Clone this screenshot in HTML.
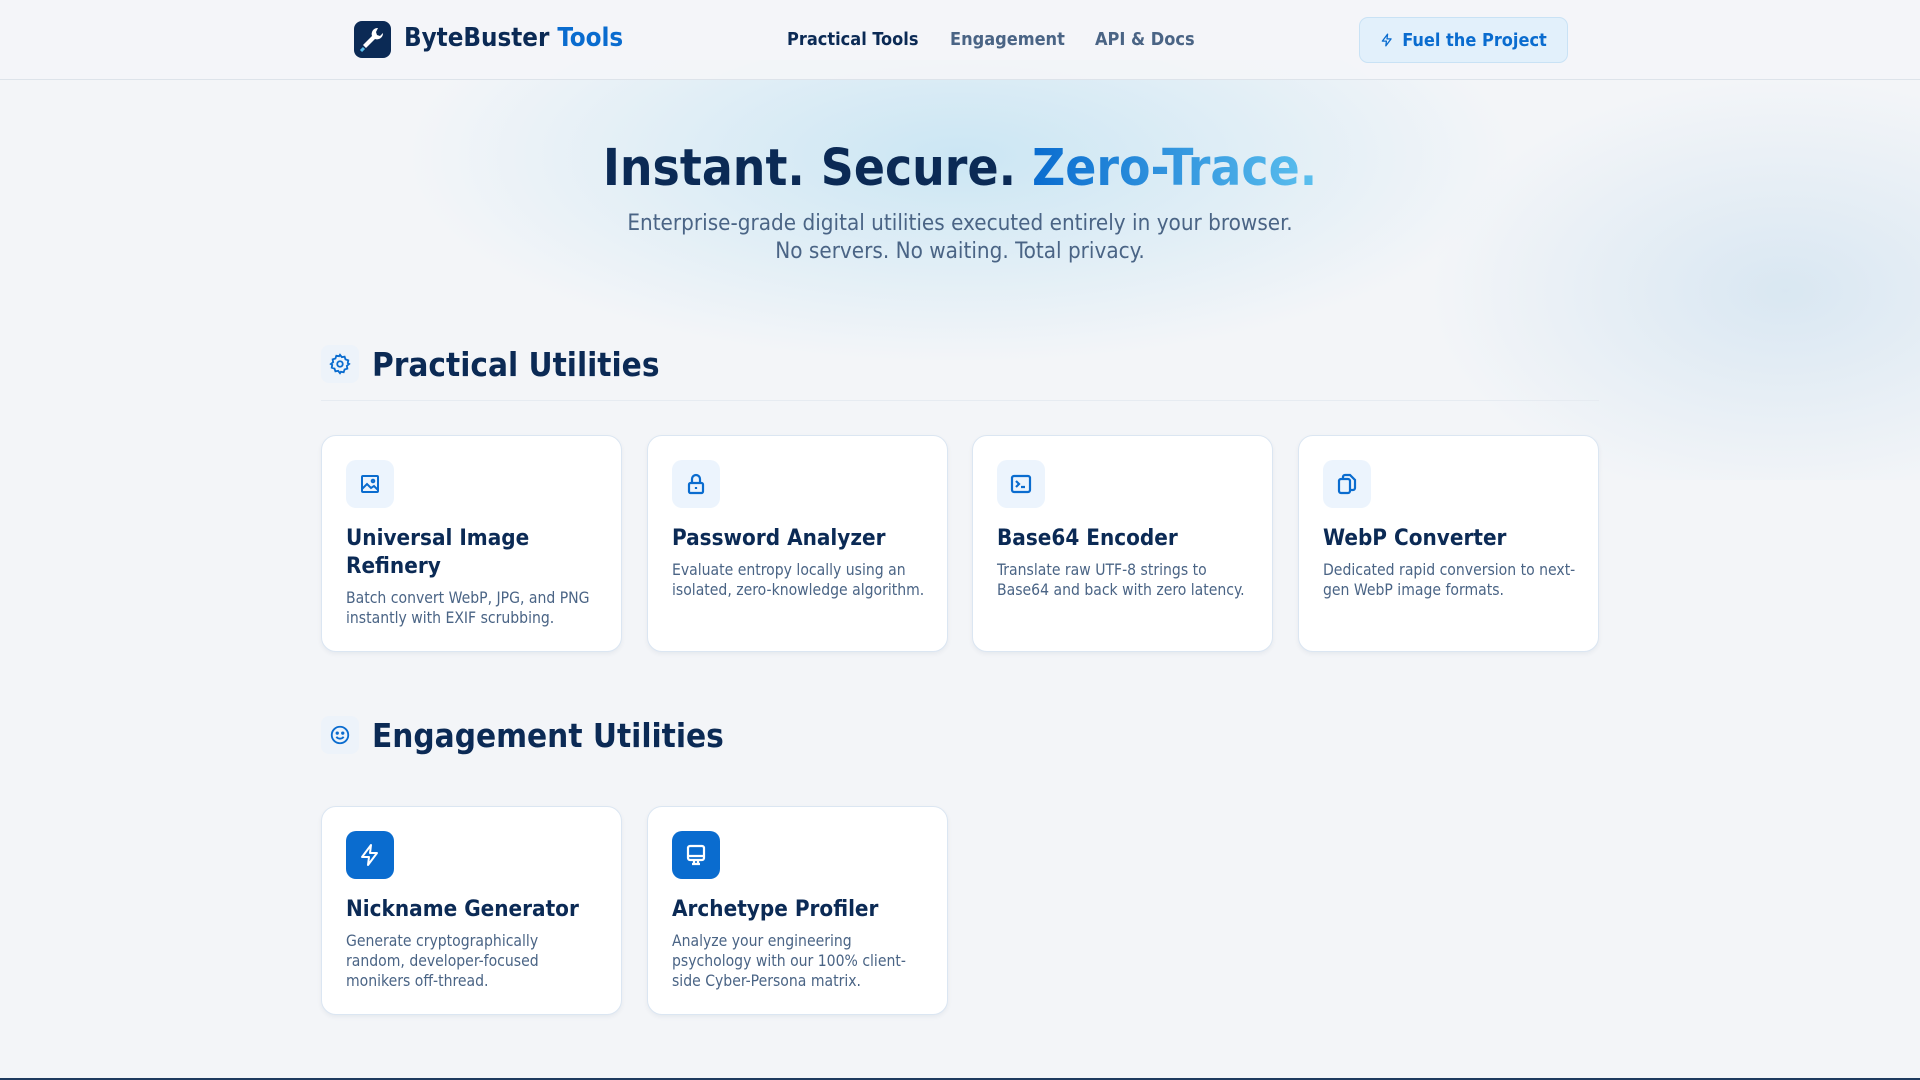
<!DOCTYPE html>
<html><head><meta charset="utf-8"><style>
*{box-sizing:border-box;margin:0;padding:0}
body{width:1920px;height:1080px;overflow:hidden;font-family:"DejaVu Sans","Liberation Sans",sans-serif;font-stretch:condensed;background:#f3f5f8;position:relative;color:#0b2a55}
.bg1{position:absolute;left:360px;top:60px;width:1200px;height:320px;background:radial-gradient(ellipse at 50% 30%,rgba(190,225,242,.75),rgba(243,245,248,0) 65%)}
.bg2{position:absolute;left:1400px;top:60px;width:700px;height:420px;background:radial-gradient(ellipse at 55% 55%,rgba(200,222,238,.6),rgba(243,245,248,0) 65%)}
header{position:absolute;left:0;top:0;width:1920px;height:80px;border-bottom:1px solid #dde3ea;background:rgba(244,245,248,.9)}
.logo{position:absolute;left:354px;top:21px;width:37px;height:37px;background:#0b2a55;border-radius:8px}
.brand{position:absolute;left:404px;top:23px;font-size:25.7px;font-weight:bold;color:#0b2a55}
.brand span{color:#0a6ccf}
.nav{position:absolute;top:29px;font-size:18px;font-weight:bold;color:#4a6485}
.btn{position:absolute;left:1359px;top:17px;width:209px;height:46px;border:1px solid #c9e2f5;background:#e2f0fb;border-radius:9px;color:#0a6ccf;font-weight:bold;font-size:18px;display:flex;align-items:center;justify-content:center;gap:8px}
h1{position:absolute;left:0;width:1920px;top:139px;text-align:center;font-size:51px;font-weight:bold;color:#0b2a55}
h1 span{background:linear-gradient(90deg,#0a6ccf,#5cc0ee);-webkit-background-clip:text;color:transparent}
.sub{position:absolute;left:0;width:1920px;top:209px;text-align:center;font-size:22.3px;line-height:28px;color:#4a6485}
.sec{position:absolute;left:321px;width:1278px}
.sico{position:absolute;left:0;top:0;width:38px;height:38px;border-radius:8px;background:#edf3fa;display:flex;align-items:center;justify-content:center}
.sec h2{position:absolute;left:51px;top:0px;font-size:33px;font-weight:bold;white-space:nowrap}
.card{position:absolute;width:301px;background:#fff;border:1px solid #dbe6f2;border-radius:15px;box-shadow:0 2px 5px rgba(20,50,90,.06);padding:24px 16px 24px 24px}
.ic{width:48px;height:48px;border-radius:10px;background:#ecf4fd;display:flex;align-items:center;justify-content:center}
.ic.s{background:#0a6ccf}
.card h3{margin-top:16px;font-size:22.3px;line-height:28px;font-weight:bold;color:#0b2a55}
.card p{margin-top:8px;font-size:15.6px;line-height:20px;color:#4a6485}
</style></head><body>
<div class="bg1"></div><div class="bg2"></div>
<header>
<div class="logo"><svg width="37" height="37" viewBox="0 0 37 37"><path d="M24 7a6 6 0 0 0-6 8l-9 9 3 3 9-9a6 6 0 0 0 8-6l-3 3-3-1-1-3z" fill="#fff"/><path d="M10 27l-3 3" stroke="#5cc0ee" stroke-width="3"/></svg></div>
<div class="brand">ByteBuster <span>Tools</span></div>
<div class="nav" style="left:787px;color:#0b2a55">Practical Tools</div>
<div class="nav" style="left:950px">Engagement</div>
<div class="nav" style="left:1095px">API &amp; Docs</div>
<div class="btn"><svg width="14" height="16" viewBox="0 0 24 24" fill="none" stroke="#0a6ccf" stroke-width="2.2" stroke-linejoin="round"><path d="M13 2L4 14h7l-1 8 9-12h-7z"/></svg>Fuel the Project</div>
</header>
<h1>Instant. Secure. <span>Zero-Trace.</span></h1>
<div class="sub">Enterprise-grade digital utilities executed entirely in your browser.<br>No servers. No waiting. Total privacy.</div>

<div class="sec" style="top:345px;height:56px;border-bottom:1px solid #e6ebf1">
<div class="sico"><svg width="22" height="22" viewBox="0 0 24 24" fill="none" stroke="#0a6ccf" stroke-width="2"><circle cx="12" cy="12" r="3"/><path d="M12 2l2 2.5 3-.5 1 3 3 1-.5 3L22 12l-2.5 2 .5 3-3 1-1 3-3-.5L12 22l-2-2.5-3 .5-1-3-3-1 .5-3L2 12l2.5-2-.5-3 3-1 1-3 3 .5z"/></svg></div>
<h2>Practical Utilities</h2></div>

<div class="card" style="left:321px;top:435px;height:217px"><div class="ic"><svg width="24" height="24" viewBox="0 0 24 24" fill="none" stroke="#0a6ccf" stroke-width="2"><rect x="4" y="4" width="16" height="16" rx="1"/><path d="M4 17l5-5 4 4 3-2 4 4"/><circle cx="15" cy="9" r="1.3"/></svg></div><h3>Universal Image Refinery</h3><p>Batch convert WebP, JPG, and PNG instantly with EXIF scrubbing.</p></div>
<div class="card" style="left:647px;top:435px;height:217px"><div class="ic"><svg width="24" height="24" viewBox="0 0 24 24" fill="none" stroke="#0a6ccf" stroke-width="2.2"><rect x="5" y="11" width="14" height="10" rx="1.5"/><path d="M8 11V7a4 4 0 0 1 8 0v4M12 15v2"/></svg></div><h3>Password Analyzer</h3><p>Evaluate entropy locally using an isolated, zero-knowledge algorithm.</p></div>
<div class="card" style="left:972px;top:435px;height:217px"><div class="ic"><svg width="24" height="24" viewBox="0 0 24 24" fill="none" stroke="#0a6ccf" stroke-width="2.2"><rect x="3" y="4" width="18" height="16" rx="2"/><path d="M7 9l3 3-3 3M12 15h4"/></svg></div><h3>Base64 Encoder</h3><p>Translate raw UTF-8 strings to Base64 and back with zero latency.</p></div>
<div class="card" style="left:1298px;top:435px;height:217px"><div class="ic"><svg width="24" height="24" viewBox="0 0 24 24" fill="none" stroke="#0a6ccf" stroke-width="2.2"><rect x="4" y="7" width="11" height="14" rx="2"/><path d="M8 7V5a2 2 0 0 1 2-2h5l5 5v8a2 2 0 0 1-2 2h-3"/></svg></div><h3>WebP Converter</h3><p>Dedicated rapid conversion to next-gen WebP image formats.</p></div>

<div class="sec" style="top:716px;height:40px">
<div class="sico"><svg width="22" height="22" viewBox="0 0 24 24" fill="none" stroke="#0a6ccf" stroke-width="2"><circle cx="12" cy="12" r="9"/><path d="M8 14a5 5 0 0 0 8 0"/><circle cx="9" cy="10" r=".8" fill="#0a6ccf"/><circle cx="15" cy="10" r=".8" fill="#0a6ccf"/></svg></div>
<h2>Engagement Utilities</h2></div>

<div class="card" style="left:321px;top:806px;height:209px"><div class="ic s"><svg width="24" height="24" viewBox="0 0 24 24" fill="none" stroke="#fff" stroke-width="2" stroke-linejoin="round"><path d="M13 2L4 14h7l-1 8 9-12h-7z"/></svg></div><h3>Nickname Generator</h3><p>Generate cryptographically<br>random, developer-focused<br>monikers off-thread.</p></div>
<div class="card" style="left:647px;top:806px;height:209px"><div class="ic s"><svg width="24" height="24" viewBox="0 0 24 24" fill="none" stroke="#fff" stroke-width="2.2"><rect x="4" y="3" width="16" height="14" rx="2"/><path d="M4 13h16M10 17v3M14 17v3M8 21h8"/></svg></div><h3>Archetype Profiler</h3><p>Analyze your engineering psychology with our 100% client-side Cyber-Persona matrix.</p></div>

<div style="position:absolute;left:0;top:1078px;width:1920px;height:2px;background:#1e3a5f"></div>
</body></html>
